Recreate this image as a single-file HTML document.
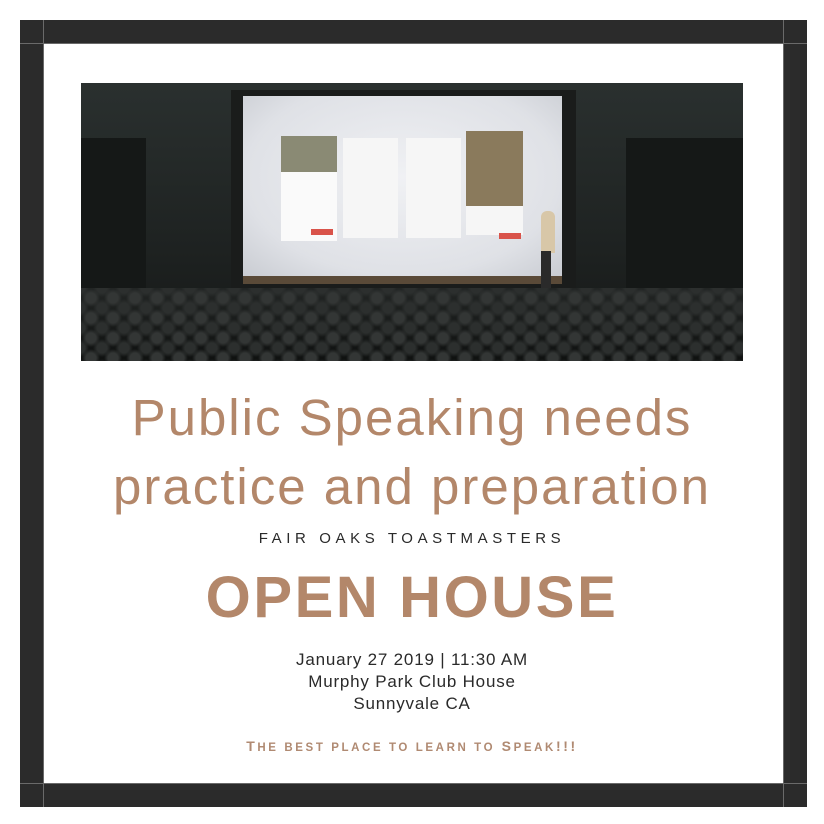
<!DOCTYPE html>
<html><head><meta charset="utf-8"><style>
*{margin:0;padding:0;box-sizing:border-box}
body{width:824px;height:824px;background:#fff;position:relative;overflow:hidden;font-family:"Liberation Sans",sans-serif}
.frame{position:absolute;left:20px;top:20px;width:787px;height:787px;border:23px solid #2b2b2b}
.ln{position:absolute;background:#6a6a6a}
.photo{position:absolute;left:81px;top:83px;width:662px;height:278px;background:linear-gradient(#2a302f,#1e2221 60%,#141615);overflow:hidden}
.c{position:absolute;left:0;width:824px;text-align:center;white-space:nowrap}
.t{color:#b3876a;font-size:51px;letter-spacing:2px}
</style></head><body>
<div class="frame"></div>
<div class="ln" style="left:20px;top:43px;width:787px;height:1px"></div>
<div class="ln" style="left:20px;top:783px;width:787px;height:1px"></div>
<div class="ln" style="left:43px;top:20px;width:1px;height:787px"></div>
<div class="ln" style="left:783px;top:20px;width:1px;height:787px"></div>
<div class="photo">
 <div style="position:absolute;left:0;top:55px;width:65px;height:200px;background:#151817"></div>
 <div style="position:absolute;left:545px;top:55px;width:117px;height:200px;background:#151817"></div>
 <div style="position:absolute;left:150px;top:7px;width:345px;height:205px;background:#1a1c1b"></div>
 <div style="position:absolute;left:162px;top:13px;width:319px;height:180px;background:radial-gradient(ellipse at 50% 45%,#f0f1f4,#dfe1e6 70%,#c9ccd2)"></div>
 <div style="position:absolute;left:162px;top:193px;width:319px;height:8px;background:#5a4a38"></div>
 <div style="position:absolute;left:200px;top:53px;width:56px;height:105px;background:#fafafa;border-top:36px solid #8a8a74"></div>
 <div style="position:absolute;left:262px;top:55px;width:55px;height:100px;background:#f6f6f6"></div>
 <div style="position:absolute;left:325px;top:55px;width:55px;height:100px;background:#f6f6f6"></div>
 <div style="position:absolute;left:385px;top:48px;width:57px;height:104px;background:#f6f6f6;border-top:75px solid #8a7a5c"></div>
 <div style="position:absolute;left:230px;top:146px;width:22px;height:6px;background:#d9534a"></div>
 <div style="position:absolute;left:418px;top:150px;width:22px;height:6px;background:#d9534a"></div>
 <div style="position:absolute;left:460px;top:128px;width:14px;height:42px;background:#d8c7a8;border-radius:6px 6px 0 0"></div>
 <div style="position:absolute;left:460px;top:168px;width:10px;height:40px;background:#2a2a2a"></div>
 <div style="position:absolute;left:0;top:205px;width:662px;height:73px;background:radial-gradient(circle at 10px 10px,#333635 5px,transparent 9px) 0 0/22px 20px,radial-gradient(circle at 10px 10px,#2c2f2e 5px,transparent 9px) 11px 10px/22px 20px,linear-gradient(#222524,#0f1110)"></div>
</div>
<div class="c t" style="top:388px">Public Speaking needs</div>
<div class="c t" style="top:457px">practice and preparation</div>
<div class="c" style="top:530px;font-size:15px;letter-spacing:4.6px;color:#2a2a2a">FAIR OAKS TOASTMASTERS</div>
<div class="c" style="top:564px;font-size:58px;font-weight:bold;letter-spacing:2.6px;color:#b3876a">OPEN HOUSE</div>
<div class="c" style="top:649px;font-size:17px;letter-spacing:.8px;color:#2a2a2a;line-height:22px">January 27 2019 | 11:30 AM<br>Murphy Park Club House<br>Sunnyvale CA</div>
<div class="c" style="top:738px;font-size:14px;font-weight:bold;letter-spacing:2.6px;color:#b08a72">T<span style="font-size:11.5px">HE BEST PLACE TO LEARN TO</span> S<span style="font-size:11.5px">PEAK</span>!!!</div>
</body></html>
